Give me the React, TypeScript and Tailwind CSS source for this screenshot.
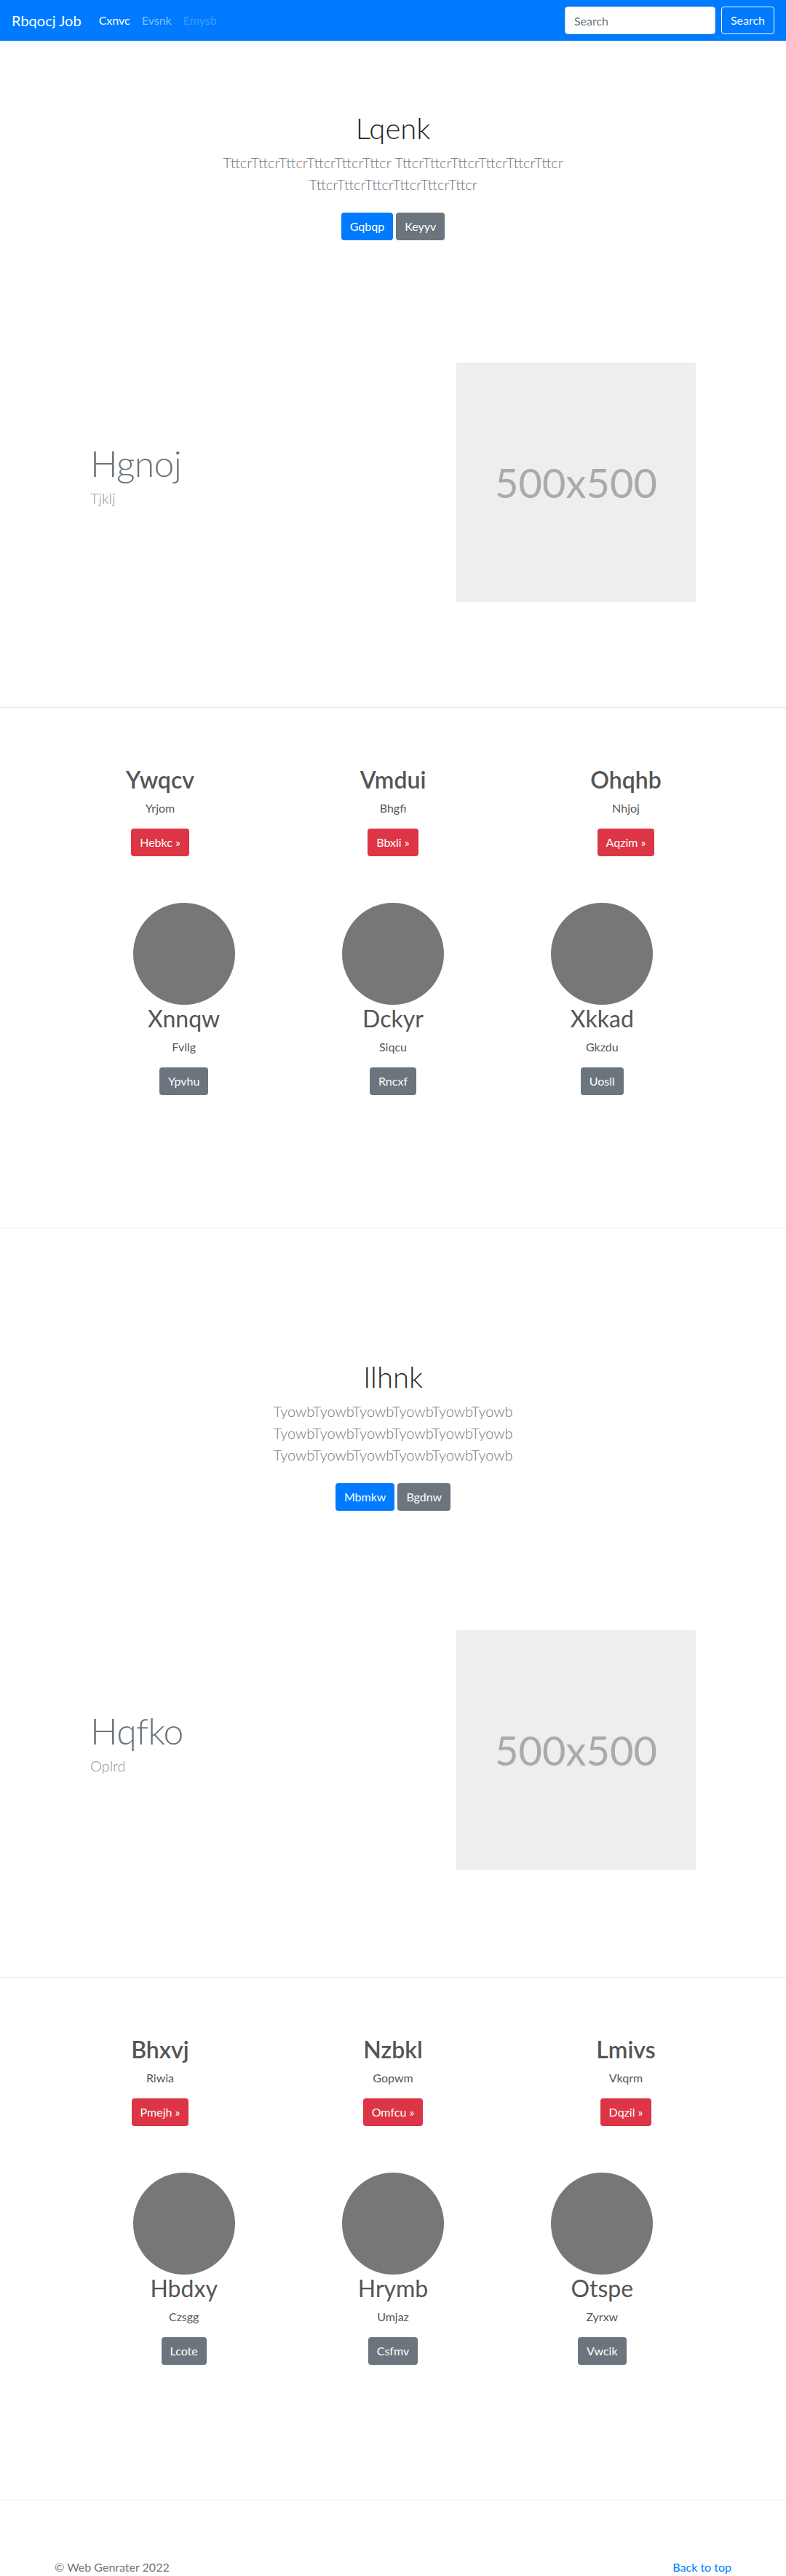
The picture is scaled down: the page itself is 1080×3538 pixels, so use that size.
import React from 'react';

type Col = { title: string; sub: string; btn: string };

function Navbar() {
  return (
    <nav className="flex h-14 items-center bg-[#007bff] px-4">
      <a className="mr-4 text-[20px] leading-[30px] text-white">Rbqocj Job</a>
      <ul className="flex">
        <li><a className="px-2 text-base text-white">Cxnvc</a></li>
        <li><a className="px-2 text-base text-white/50">Evsnk</a></li>
        <li><a className="px-2 text-base text-white/25">Emysb</a></li>
      </ul>
      <form className="ml-auto flex items-center">
        <input
          type="text"
          placeholder="Search"
          className="mr-2 h-[38px] w-[207px] rounded border border-[#ced4da] bg-white px-3 text-base text-[#495057] placeholder:text-[#6c757d]"
        />
        <button type="button" className="h-[38px] rounded border border-[#f8f9fa] px-3 text-base text-[#f8f9fa]">
          Search
        </button>
      </form>
    </nav>
  );
}

function Hero({ title, lines, primary, secondary }: { title: string; lines: string[]; primary: string; secondary: string }) {
  return (
    <section className="text-center">
      <h1 className="text-[40px] font-light leading-[48px] text-[#212529]">{title}</h1>
      <p className="mt-2 text-[20px] font-light leading-[30px] text-[#6c757d]">
        {lines.map((l, i) => (
          <span key={i} className="block whitespace-nowrap">{l}</span>
        ))}
      </p>
      <div className="mt-6 flex justify-center gap-1">
        <a className="flex h-[38px] items-center rounded bg-[#007bff] px-3 text-base text-white">{primary}</a>
        <a className="flex h-[38px] items-center rounded bg-[#6c757d] px-3 text-base text-white">{secondary}</a>
      </div>
    </section>
  );
}

function Featurette({ title, sub }: { title: string; sub: string }) {
  return (
    <div className="mx-auto flex max-w-[862px] items-center">
      <div className="w-[503px] px-[15px]">
        <h2 className="text-[50px] font-light leading-none tracking-[-0.8px] text-[#6c757d]">{title}</h2>
        <p className="mb-4 mt-2 text-[20px] font-light leading-[30px] text-[#8a9197]">{sub}</p>
      </div>
      <div className="flex w-[359px] justify-center px-[15px]">
        {/* placeholder image */}
        <div className="flex h-[329px] w-[329px] items-center justify-center bg-[#eeeeee] text-[56px] text-[#aaaaaa]">
          500x500
        </div>
      </div>
    </div>
  );
}

function Marketing({ cols }: { cols: Col[] }) {
  return (
    <div className="mx-auto grid max-w-[960px] grid-cols-3 text-center">
      {cols.map((c) => (
        <div key={c.title} className="px-[15px]">
          <h2 className="text-[32px] font-semibold leading-[38px] text-[#555555]">{c.title}</h2>
          <p className="mt-2 text-base leading-6 text-[#555555]">{c.sub}</p>
          <a className="mt-4 inline-flex h-[38px] items-center rounded bg-[#dc3545] px-3 text-base text-white">
            {c.btn} »
          </a>
        </div>
      ))}
    </div>
  );
}

function People({ cols }: { cols: Col[] }) {
  return (
    <div className="mx-auto grid max-w-[862px] grid-cols-3 text-center">
      {cols.map((c) => (
        <div key={c.title} className="flex flex-col items-center px-[15px]">
          <div className="h-[140px] w-[140px] rounded-full bg-[#777777]" />
          <h2 className="text-[32px] leading-[38px] text-[#555555]">{c.title}</h2>
          <p className="mt-2 text-base leading-6 text-[#555555]">{c.sub}</p>
          <a className="mt-4 inline-flex h-[38px] items-center rounded bg-[#6c757d] px-3 text-base text-white">
            {c.btn}
          </a>
        </div>
      ))}
    </div>
  );
}

function Divider({ className }: { className: string }) {
  return <hr className={`border-0 border-t border-[#e5e5e5] ${className}`} />;
}

export default function App() {
  const tt = 'TttcrTttcrTttcrTttcrTttcrTttcr';
  const ty = 'TyowbTyowbTyowbTyowbTyowbTyowb';

  return (
    <div className="min-h-screen bg-white font-['Lato',sans-serif] text-[#212529]">
      <Navbar />

      <div className="pt-[96px]">
        <Hero title="Lqenk" lines={[`${tt} ${tt}`, tt]} primary="Gqbqp" secondary="Keyyv" />
      </div>
      <div className="mt-[168px]">
        <Featurette title="Hgnoj" sub="Tjklj" />
      </div>
      <Divider className="mt-[144px]" />
      <div className="mt-[80px]">
        <Marketing
          cols={[
            { title: 'Ywqcv', sub: 'Yrjom', btn: 'Hebkc' },
            { title: 'Vmdui', sub: 'Bhgfi', btn: 'Bbxli' },
            { title: 'Ohqhb', sub: 'Nhjoj', btn: 'Aqzim' },
          ]}
        />
      </div>
      <div className="mt-16">
        <People
          cols={[
            { title: 'Xnnqw', sub: 'Fvllg', btn: 'Ypvhu' },
            { title: 'Dckyr', sub: 'Siqcu', btn: 'Rncxf' },
            { title: 'Xkkad', sub: 'Gkzdu', btn: 'Uosll' },
          ]}
        />
      </div>
      <Divider className="mt-[182px]" />

      <div className="mt-[180px]">
        <Hero title="Ilhnk" lines={[ty, ty, ty]} primary="Mbmkw" secondary="Bgdnw" />
      </div>
      <div className="mt-[164px]">
        <Featurette title="Hqfko" sub="Oplrd" />
      </div>
      <Divider className="mt-[147px]" />
      <div className="mt-[80px]">
        <Marketing
          cols={[
            { title: 'Bhxvj', sub: 'Riwia', btn: 'Pmejh' },
            { title: 'Nzbkl', sub: 'Gopwm', btn: 'Omfcu' },
            { title: 'Lmivs', sub: 'Vkqrm', btn: 'Dqzil' },
          ]}
        />
      </div>
      <div className="mt-16">
        <People
          cols={[
            { title: 'Hbdxy', sub: 'Czsgg', btn: 'Lcote' },
            { title: 'Hrymb', sub: 'Umjaz', btn: 'Csfmv' },
            { title: 'Otspe', sub: 'Zyrxw', btn: 'Vwcik' },
          ]}
        />
      </div>
      <Divider className="mt-[185px]" />

      <footer className="mx-auto mt-[80px] flex max-w-[960px] justify-between px-[15px] text-base leading-6">
        <p className="text-[#6c757d]">© Web Genrater 2022</p>
        <a className="text-[#007bff]">Back to top</a>
      </footer>
    </div>
  );
}
